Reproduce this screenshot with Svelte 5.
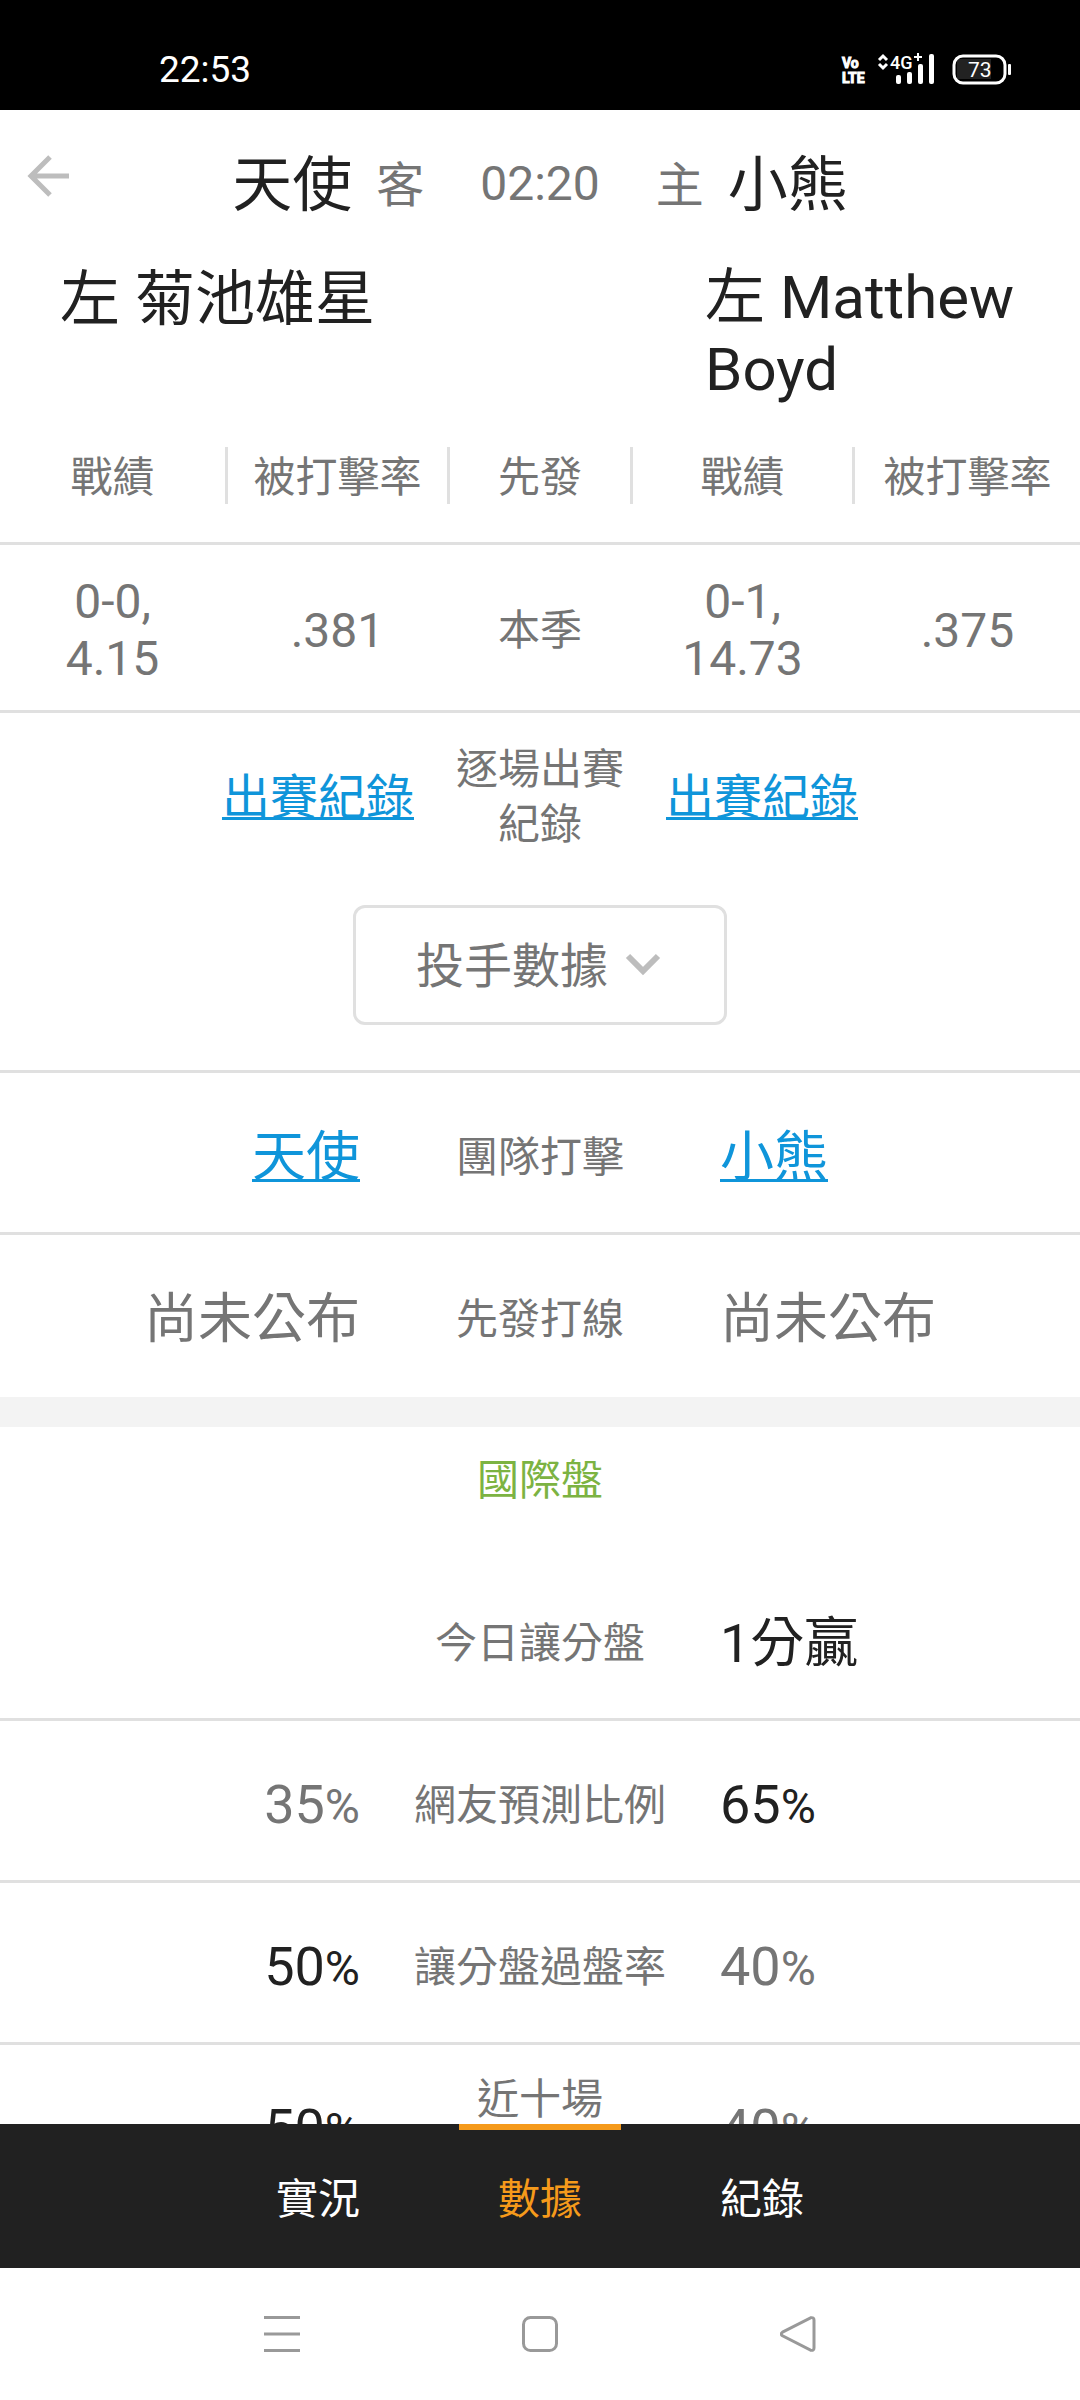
<script>
  const comparisons = [
    { away: '35', label: '網友預測比例', home: '65', lead: 'home' },
    { away: '50', label: '讓分盤過盤率', home: '40', lead: 'away' },
    { away: '50', label: '近十場', home: '40', lead: 'away', top: true }
  ];
  const tabs = ['實況', '數據', '紀錄'];
  let active = $state('數據');
  let view = $state('pitcher');
</script>

<div class="screen">
  <div class="status">
    <span class="clock">22:53</span>
    <svg class="signals" viewBox="0 0 176 36" aria-label="VoLTE 4G+ 73">
      <g class="lte">
        <text x="2" y="17">Vo</text>
        <text x="2" y="32">LTE</text>
      </g>
      <path d="M39 9l4-4 4 4M39 13l4 4 4-4" fill="none" stroke="#fff" stroke-width="3" />
      <text class="net" x="50" y="18">4G</text>
      <path d="M74 6h8M78 2v8" stroke="#fff" stroke-width="2" />
      <g fill="#fff">
        <rect x="56" y="24" width="5" height="9" rx="2" />
        <rect x="67" y="21" width="5" height="12" rx="2" />
        <rect x="78" y="13" width="5" height="20" rx="2" />
        <rect x="89" y="3" width="5" height="30" rx="2" />
        <rect x="168" y="13" width="3" height="11" rx="1" />
      </g>
      <rect x="117" y="8" width="34" height="20" fill="#222" />
      <rect x="114" y="5" width="51" height="27" rx="9" fill="none" stroke="#fff" stroke-width="3" />
      <text class="charge" x="128" y="26">73</text>
    </svg>
  </div>

  <header>
    <button class="back" aria-label="返回">
      <svg viewBox="0 0 42 42"><path d="M42 21H4M23 2L4 21l19 19" fill="none" stroke="#bdbdbd" stroke-width="5" /></svg>
    </button>
    <h1>
      <span class="team">天使</span><span class="side">客</span>
      <time>02:20</time>
      <span class="side">主</span><span class="team">小熊</span>
    </h1>
  </header>

  <main>
    <div class="names">
      <div>左 菊池雄星</div>
      <div>左 Matthew Boyd</div>
    </div>

    <table>
      <thead>
        <tr>
          <th><span>戰績</span></th>
          <th><span class="ruled">被打擊率</span></th>
          <th><span>先發</span></th>
          <th><span class="ruled">戰績</span></th>
          <th><span>被打擊率</span></th>
        </tr>
      </thead>
      <tbody>
        <tr>
          <td>0-0,<br />4.15</td>
          <td>.381</td>
          <th scope="row">本季</th>
          <td>0-1,<br />14.73</td>
          <td>.375</td>
        </tr>
      </tbody>
    </table>

    <div class="logs">
      <a href="#away-log">出賽紀錄</a>
      <span>逐場出賽紀錄</span>
      <a href="#home-log">出賽紀錄</a>
    </div>

    <div class="picker">
      <select bind:value={view} aria-label="數據類型">
        <option value="pitcher">投手數據</option>
      </select>
      <svg viewBox="0 0 36 24"><path d="M3 3l15 15L33 3" fill="none" stroke="#bdbdbd" stroke-width="6" /></svg>
    </div>

    <section class="batting">
      <div class="row">
        <a href="#away">天使</a><span class="label">團隊打擊</span><a href="#home">小熊</a>
      </div>
      <div class="row">
        <span>尚未公布</span><span class="label">先發打線</span><span>尚未公布</span>
      </div>
    </section>

    <section class="odds">
      <h2>國際盤</h2>
      <div class="row">
        <span></span><span class="label">今日讓分盤</span><span class="lead">1分贏</span>
      </div>
      {#each comparisons as c}
        <div class="row">
          <span class:lead={c.lead === 'away'}>{c.away}<small>%</small></span>
          <span class="label" class:top={c.top}>{c.label}</span>
          <span class:lead={c.lead === 'home'}>{c.home}<small>%</small></span>
        </div>
      {/each}
    </section>
  </main>

  <nav class="tabs">
    {#each tabs as tab}
      <button class:active={active === tab} onclick={() => (active = tab)}>{tab}</button>
    {/each}
  </nav>

  <div class="system">
    <button aria-label="選單"><svg viewBox="0 0 36 36"><path d="M0 1.5h36M0 18h36M0 34.5h36" /></svg></button>
    <button aria-label="主畫面"><svg viewBox="0 0 36 36"><rect x="1.5" y="1.5" width="33" height="33" rx="7" /></svg></button>
    <button aria-label="上一頁"><svg viewBox="0 0 36 36"><path d="M2.500 16.200L30.500 1.800Q34 1 34 4V32Q34 35 30.500 34.200L2.500 19.800Q0 18 2.500 16.200Z" /></svg></button>
  </div>
</div>

<style>
  :global(body) {
    margin: 0;
  }
  .screen {
    display: flex;
    flex-direction: column;
    height: 100vh;
    overflow: hidden;
    background: #fff;
    color: #757575;
    font-family: Roboto, 'Noto Sans CJK TC', sans-serif;
    font-size: 42px;
    line-height: 55px;
  }
  button,
  select {
    font: inherit;
    color: inherit;
    background: none;
    border: 0;
    padding: 0;
    margin: 0;
  }
  svg {
    display: block;
  }
  .status {
    flex: none;
    display: flex;
    justify-content: space-between;
    align-items: center;
    box-sizing: border-box;
    height: 110px;
    padding: 28px 64px 0 159px;
    background: #000;
    color: #fff;
  }
  .clock {
    font-size: 37px;
  }
  .signals {
    width: 176px;
    height: 36px;
  }
  .signals text {
    fill: #fff;
  }
  .lte {
    font: 700 14px Roboto, sans-serif;
    stroke: #fff;
    stroke-width: 1px;
  }
  .net {
    font: 500 18px Roboto, sans-serif;
  }
  .charge {
    font: 400 21px Roboto, sans-serif;
  }
  header {
    flex: none;
    display: grid;
    grid-template-columns: 96px 1fr 96px;
    align-items: center;
    height: 150px;
  }
  .back {
    justify-self: center;
    padding-bottom: 18px;
  }
  .back svg {
    width: 42px;
    height: 42px;
  }
  h1 {
    display: flex;
    justify-content: center;
    align-items: center;
    gap: 24px;
    margin: 0;
    font-size: 48px;
    font-weight: 400;
  }
  time {
    margin: 0 32px;
    padding-bottom: 3px;
  }
  .team {
    font-size: 60px;
    color: #212121;
  }
  main {
    flex: 1;
    min-height: 0;
    overflow: hidden;
  }
  .names {
    display: flex;
    justify-content: space-between;
    padding: 2px 60px 0;
    font-size: 60px;
    line-height: 72px;
    color: #212121;
  }
  .names div {
    flex: 0 1 315px;
  }
  .names div:first-child {
    padding-top: 2px;
  }
  table,
  thead,
  tbody {
    display: block;
  }
  tr {
    display: grid;
    grid-template-columns: 5fr 5fr 4fr 5fr 5fr;
    align-items: center;
    border-bottom: 3px solid #e0e0e0;
    text-align: center;
  }
  th,
  td {
    padding: 0;
    font-weight: 400;
  }
  thead tr {
    padding: 41px 0 38px;
  }
  thead span {
    display: block;
    padding-top: 4px;
    line-height: 53px;
  }
  .ruled {
    border: solid #e0e0e0;
    border-width: 0 3px;
  }
  tbody tr {
    padding: 28px 0 23px;
  }
  td {
    font-size: 48px;
    line-height: 57px;
  }
  a {
    color: #0f95da;
    text-decoration: underline;
    text-decoration-thickness: 3px;
    text-underline-offset: 3px;
    text-decoration-skip-ink: none;
  }
  .logs {
    display: grid;
    grid-template-columns: 5fr 2fr 5fr;
    align-items: center;
    padding: 29px 0 26px;
    text-align: center;
  }
  .logs a {
    justify-self: start;
    margin: 0 36px;
    font-size: 48px;
  }
  .logs a:first-child {
    justify-self: end;
  }
  .picker {
    position: relative;
    width: fit-content;
    margin: 27px auto 45px;
  }
  select {
    appearance: none;
    display: block;
    height: 120px;
    padding: 3px 115px 0 60px;
    border: 3px solid #e0e0e0;
    border-radius: 12px;
    font-size: 48px;
  }
  .picker svg {
    position: absolute;
    top: 48px;
    right: 66px;
    width: 36px;
    height: 24px;
    pointer-events: none;
  }
  .batting {
    border-top: 3px solid #e0e0e0;
    border-bottom: 30px solid #f3f3f3;
  }
  .row {
    display: grid;
    grid-template-columns: 1fr 1fr 1fr;
    align-items: center;
    height: 150px;
    padding-top: 9px;
    border-bottom: 3px solid #e0e0e0;
    font-size: 54px;
  }
  .row > :first-child {
    justify-self: end;
  }
  .batting .row:last-child {
    border-color: #fff;
  }
  .label {
    font-size: 42px;
    text-align: center;
  }
  .label.top {
    align-self: start;
    padding-top: 18px;
  }
  .lead {
    color: #212121;
  }
  small {
    font-size: 48px;
  }
  h2 {
    margin: 0;
    padding: 26px 0 51px;
    font-size: 42px;
    font-weight: 400;
    text-align: center;
    color: #7cb342;
  }
  .tabs {
    flex: none;
    display: flex;
    justify-content: center;
    gap: 60px;
    background: #212121;
    color: #fff;
  }
  .tabs button {
    width: 162px;
    height: 144px;
    border-top: 6px solid transparent;
  }
  .tabs .active {
    color: #f59a1b;
    border-top-color: #f59a1b;
  }
  .system {
    flex: none;
    display: flex;
    justify-content: center;
    align-items: center;
    gap: 222px;
    height: 132px;
  }
  .system svg {
    width: 36px;
    height: 36px;
    fill: none;
    stroke: #999;
    stroke-width: 3px;
  }
</style>
